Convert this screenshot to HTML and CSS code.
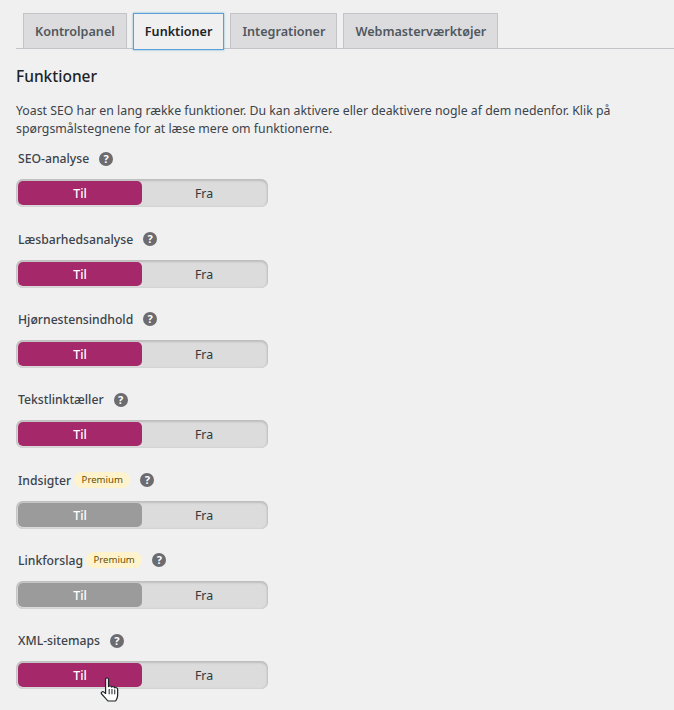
FILE: index.html
```html
<!DOCTYPE html>
<html lang="da">
  <head>
    <meta charset="utf-8">
    <link rel="stylesheet" href="styles.css">
    <title>Funktioner</title>
  </head>
  <body>
    <nav class="tabs">
      <a class="tab" href="#">Kontrolpanel</a>
      <a class="tab tab-active" href="#">Funktioner</a>
      <a class="tab" href="#">Integrationer</a>
      <a class="tab" href="#">Webmasterværktøjer</a>
    </nav>
    <h2 class="title">Funktioner</h2>
    <p class="intro">Yoast SEO har en lang række funktioner. Du kan aktivere eller deaktivere nogle af dem nedenfor. Klik på spørgsmålstegnene for at læse mere om funktionerne.</p>

    <div class="feature">
      <div class="label">SEO-analyse <span class="help">?</span></div>
      <div class="toggle"><span class="on">Til</span><span class="off">Fra</span></div>
    </div>
    <div class="feature">
      <div class="label">Læsbarhedsanalyse <span class="help">?</span></div>
      <div class="toggle"><span class="on">Til</span><span class="off">Fra</span></div>
    </div>
    <div class="feature">
      <div class="label">Hjørnestensindhold <span class="help">?</span></div>
      <div class="toggle"><span class="on">Til</span><span class="off">Fra</span></div>
    </div>
    <div class="feature">
      <div class="label">Tekstlinktæller <span class="help">?</span></div>
      <div class="toggle"><span class="on">Til</span><span class="off">Fra</span></div>
    </div>
    <div class="feature">
      <div class="label">Indsigter <span class="premium">Premium</span> <span class="help">?</span></div>
      <div class="toggle"><span class="on disabled">Til</span><span class="off">Fra</span></div>
    </div>
    <div class="feature">
      <div class="label">Linkforslag <span class="premium">Premium</span> <span class="help">?</span></div>
      <div class="toggle"><span class="on disabled">Til</span><span class="off">Fra</span></div>
    </div>
    <div class="feature">
      <div class="label">XML-sitemaps <span class="help">?</span></div>
      <div class="toggle">
        <span class="on">Til</span><span class="off">Fra</span>
        <svg class="cursor" width="19" height="25" viewBox="0 0 17 26" preserveAspectRatio="none">
          <path d="M5 2.2C5 .6 7.6 .6 7.6 2.2V10C8 9 10.2 9 10.4 10.6 10.8 9.6 13 9.8 13.2 11.4 13.8 10.6 15.8 11 15.8 12.8V18.5C15.8 21.5 14.4 24.5 13.8 25H7.2C6 23.4 3.6 20.6 1.4 17.6 .4 16 2.2 14.6 3.4 15.6L5 17.2Z" fill="#fff" stroke="#1d2327" stroke-width="1.1" stroke-linejoin="round"/>
          <path d="M8.2 12.5V18M10.7 12.5V18M13.2 13V18" fill="none" stroke="#1d2327" stroke-width=".9"/>
        </svg>
      </div>
    </div>
  </body>
</html>
```

FILE: styles.css
```css
html, body {
  height: 710px;
  overflow: hidden;
}
body {
  margin: 0;
  padding: 13px 0 0 16px;
  background: #f0f0f1;
  color: #3c434a;
  font-family: "Noto Sans", "Open Sans", sans-serif;
  font-size: 12.3px;
}
.tabs {
  display: flex;
  gap: 6px;
  height: 35px;
  padding-left: 7px;
  border-bottom: 1px solid #c3c4c7;
}
.tab {
  height: 35px;
  padding: 0 11px;
  line-height: 35px;
  box-sizing: border-box;
  border: 1px solid #c3c4c7;
  border-bottom: 0;
  background: #dcdcde;
  color: #50575e;
  font-size: 12.6px;
  font-weight: 600;
  text-decoration: none;
  white-space: nowrap;
}
.tab-active {
  height: 37px;
  background: #f0f0f1;
  color: #1d2327;
  border: 1px solid #5b9dd9;
  box-shadow: 0 0 2px rgba(30, 140, 190, .6);
}
.title {
  margin: 16px 0 0;
  color: #1d2327;
  font-size: 15.5px;
  font-weight: 500;
  line-height: 22px;
}
.intro {
  width: 625px;
  margin: 15px 0 0;
  padding-bottom: .3px;
  line-height: 18px;
}
.feature {
  height: 80.33px;
  padding-top: 10px;
  box-sizing: border-box;
}
.label {
  display: flex;
  align-items: center;
  height: 21px;
  margin: 0 0 10px 2px;
  font-size: 12.2px;
  font-weight: 500;
}
.help {
  width: 14px;
  height: 14px;
  margin-left: 10px;
  border-radius: 50%;
  background: #6b6b70;
  color: #fff;
  font-size: 11px;
  font-weight: 700;
  line-height: 14px;
  text-align: center;
}
.premium {
  height: 16px;
  margin-left: 3px;
  padding: 0 7.5px;
  border-radius: 8px;
  background: #fff3cd;
  color: #674e00;
  font-size: 9.6px;
  font-weight: 400;
  line-height: 16px;
}
.premium + .help {
  margin-left: 10px;
}
.toggle {
  position: relative;
  display: flex;
  width: 252px;
  height: 28px;
  padding: 2px;
  box-sizing: border-box;
  border-radius: 7px;
  background: #dcdcdc;
  box-shadow: inset 0 1px 2px 1px #bdbdbd;
  line-height: 26px;
  text-align: center;
}
.on {
  width: 124px;
  border-radius: 5px;
  background: #a4286a;
  color: #fff;
  font-weight: 500;
}
.on.disabled {
  background: #9b9b9b;
}
.off {
  flex: 1;
  color: #32373c;
}
.cursor {
  position: absolute;
  left: 84px;
  top: 16px;
}
```
